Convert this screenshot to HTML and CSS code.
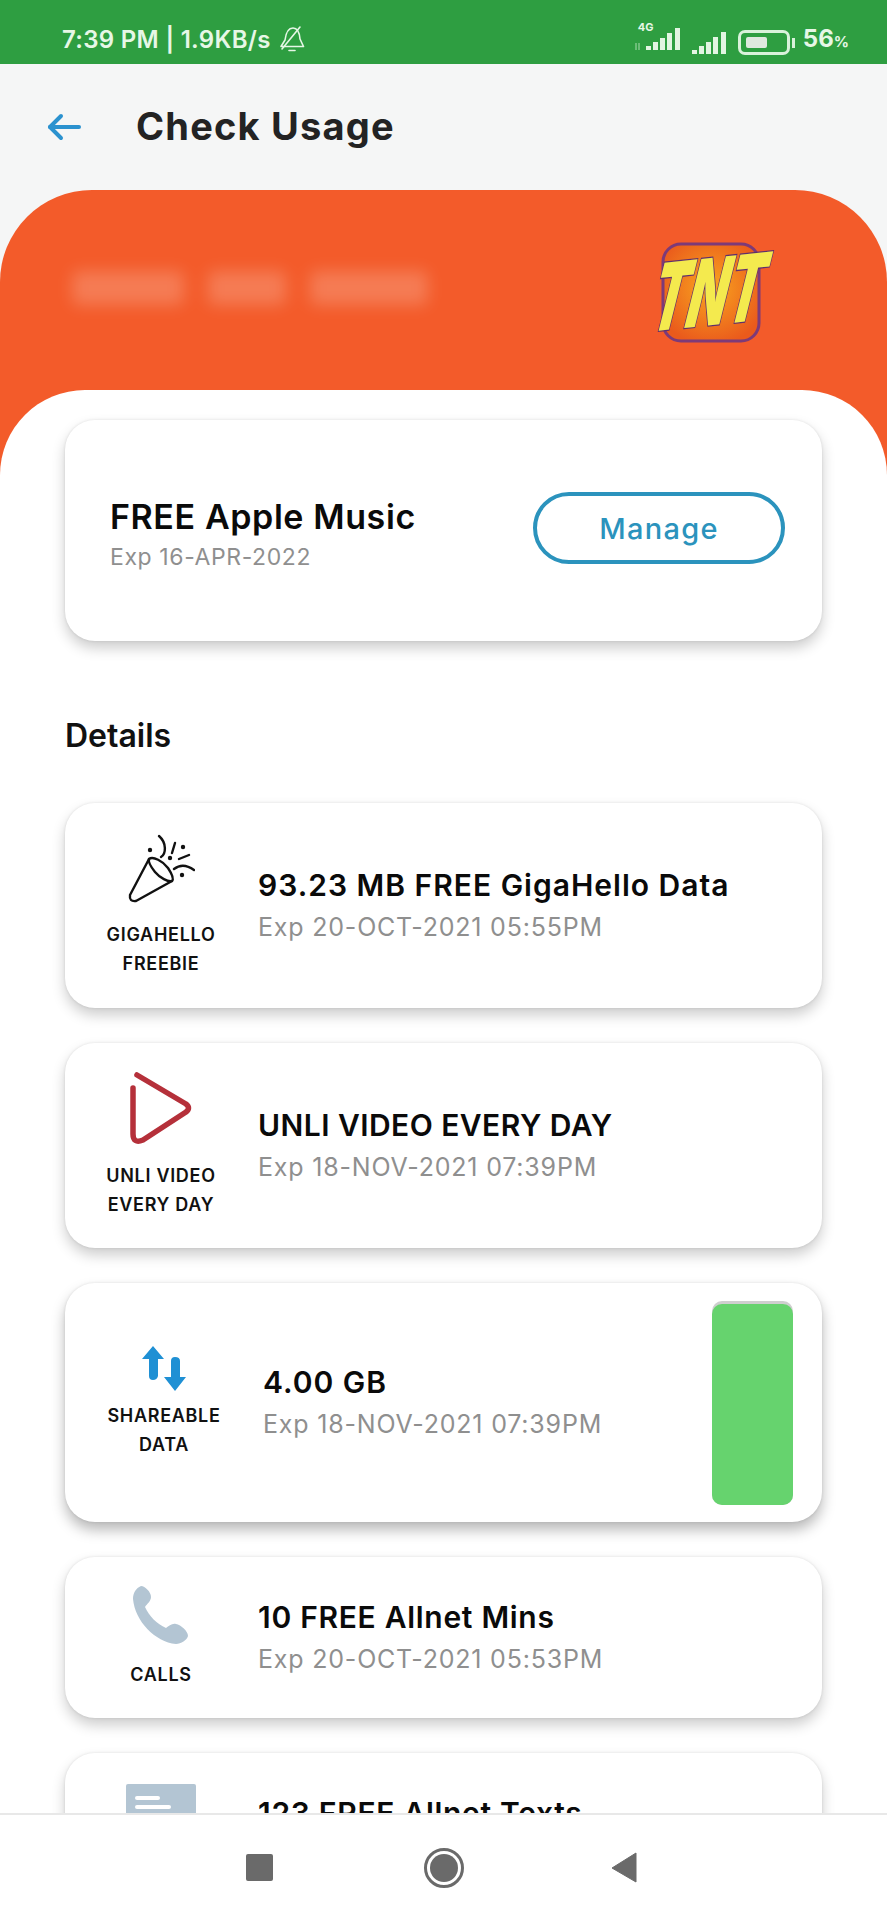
FILE: index.html
```html
<!DOCTYPE html>
<html lang="en">
<head>
    <meta charset="UTF-8">
    <meta name="viewport" content="width=device-width, initial-scale=1.0">
    <title>Check Usage</title>
    <link rel="stylesheet" href="styles.css">
</head>
<body>

    <!-- status bar -->
    <div class="status-bar">
        <div class="status-left">
            <span>7:39 PM | 1.9KB/s</span>
            <svg class="bell" width="28" height="28" viewBox="0 0 28 28" fill="none" stroke="#e6f7e6" stroke-width="1.6" stroke-linecap="round" stroke-linejoin="round">
                <path d="M3 21.5 L7 15 C8 7 11 3 15 3 C20 3 21.5 8 22 14 L25.5 21.5 Z"/>
                <path d="M11 25.5 H17"/>
                <path d="M4 24 L22 2"/>
            </svg>
        </div>
        <div class="status-right">
            <div class="signal-wrap">
                <span class="tag-4g">4G</span>
                <svg width="47" height="28" viewBox="0 0 47 28" fill="#e2f5e2">
                    <path d="M2 27 V20 M5 27 V20" stroke="#a9dcae" stroke-width="1" fill="none"/>
                    <rect x="12" y="23" width="5" height="4"/>
                    <rect x="19" y="19" width="5" height="8"/>
                    <rect x="26" y="15" width="5" height="12"/>
                    <rect x="33" y="10" width="5" height="17"/>
                    <rect x="41" y="5" width="5" height="22"/>
                </svg>
            </div>
            <svg width="35" height="28" viewBox="0 0 35 28" fill="#e2f5e2">
                <rect x="0" y="23" width="5" height="4"/>
                <rect x="7" y="19" width="5" height="8"/>
                <rect x="14" y="15" width="5" height="12"/>
                <rect x="21" y="10" width="5" height="17"/>
                <rect x="29" y="5" width="5" height="22"/>
            </svg>
            <div class="battery"><div class="battery-level"></div></div>
            <div class="battery-nub"></div>
            <span class="percent">56<small>%</small></span>
        </div>
    </div>

    <!-- title bar -->
    <div class="top-bar">
        <svg class="back" width="34" height="28" viewBox="0 0 34 28" fill="none" stroke="#2b92cf" stroke-width="4" stroke-linecap="round" stroke-linejoin="round">
            <path d="M14 3 L3 14 L14 25"/>
            <path d="M3 14 H32"/>
        </svg>
        <h1>Check Usage</h1>
    </div>

    <div class="main">
        <div class="hero">
            <div class="hero-head">
                <div class="masked-number">
                    <span class="blob blob-a"></span>
                    <span class="blob blob-b"></span>
                    <span class="blob blob-c"></span>
                </div>
                <svg class="logo" width="126" height="100" viewBox="0 0 126 100">
                    <defs>
                        <radialGradient id="logo-glow" cx="50%" cy="45%" r="60%">
                            <stop offset="0%" stop-color="#f9a51f"/>
                            <stop offset="100%" stop-color="#ea5a1c"/>
                        </radialGradient>
                    </defs>
                    <rect x="11" y="2" width="96" height="97" rx="18" fill="url(#logo-glow)" stroke="#7d3a78" stroke-width="3"/>
                    <text class="logo-text" transform="translate(-6 90) rotate(-6) skewX(-20)" textLength="112" lengthAdjust="spacingAndGlyphs">TNT</text>
                </svg>
            </div>

            <div class="sheet">
                <div class="card card-promo">
                    <div class="card-text">
                        <div class="promo-title">FREE Apple Music</div>
                        <div class="promo-exp">Exp 16-APR-2022</div>
                    </div>
                    <button class="manage-button">Manage</button>
                </div>

                <h2>Details</h2>

                <div class="card-list">
                    <div class="card">
                        <div class="card-icon">
                            <svg width="68" height="70" viewBox="0 0 68 70" fill="none" stroke="#111" stroke-width="2.4" stroke-linecap="round" stroke-linejoin="round">
                                <path d="M22 25 L3 61 Q2 68 9 67 L45 47"/>
                                <path d="M22 25 C26 22 36 27 41 34 C45 40 47 45 45 47 C41 48 33 44 28 38 C24 33 21 28 22 25 Z"/>
                                <path d="M32 2 C40 9 39 20 34 23"/>
                                <path d="M48 9 L45 19"/>
                                <path d="M52 25 L62 21"/>
                                <path d="M47 35 Q56 28 67 36"/>
                                <g fill="#111" stroke="none">
                                    <circle cx="23" cy="16" r="2.2"/>
                                    <circle cx="43" cy="24" r="2.2"/>
                                    <circle cx="56" cy="13" r="2.2"/>
                                    <circle cx="55" cy="41" r="2.2"/>
                                </g>
                            </svg>
                            <div class="card-label">GIGAHELLO<br>FREEBIE</div>
                        </div>
                        <div class="card-text">
                            <div class="card-title">93.23 MB FREE GigaHello Data</div>
                            <div class="card-exp">Exp 20-OCT-2021 05:55PM</div>
                        </div>
                    </div>

                    <div class="card">
                        <div class="card-icon">
                            <svg width="62" height="73" viewBox="0 0 62 73" fill="none" stroke="#b5303a" stroke-width="5.5" stroke-linecap="round" stroke-linejoin="round">
                                <path d="M7 3 L56 32 Q61 36 56 40 L13 68 Q3 72 3 62 V16"/>
                            </svg>
                            <div class="card-label">UNLI VIDEO<br>EVERY DAY</div>
                        </div>
                        <div class="card-text">
                            <div class="card-title title-caps">UNLI VIDEO EVERY DAY</div>
                            <div class="card-exp">Exp 18-NOV-2021 07:39PM</div>
                        </div>
                    </div>

                    <div class="card card-tall">
                        <div class="card-icon">
                            <svg width="45" height="46" viewBox="0 0 45 46" fill="#1f90d4">
                                <path d="M11 0 L22 13 H16 V30 Q15 34 11 34 Q7 34 7 30 V13 H0 Z"/>
                                <path d="M33 45 L22 31 H29 V15 Q29 11 33 11 Q38 11 38 15 V31 H44 Z"/>
                            </svg>
                            <div class="card-label">SHAREABLE<br>DATA</div>
                        </div>
                        <div class="card-text">
                            <div class="card-title">4.00 GB</div>
                            <div class="card-exp">Exp 18-NOV-2021 07:39PM</div>
                        </div>
                        <div class="meter"><div class="meter-fill"></div></div>
                    </div>

                    <div class="card card-short">
                        <div class="card-icon">
                            <svg width="56" height="58" viewBox="0 0 56 58" fill="#b3c5d3">
                                <path d="M0 13 C0 7 3 2 8 0 C12 0 18 6 18 11 C18 15 14 18 12 21 C16 30 24 38 33 42 C36 40 39 37 43 38 C48 39 55 45 55 50 C54 54 48 58 43 58 C22 56 2 35 0 13 Z"/>
                            </svg>
                            <div class="card-label">CALLS</div>
                        </div>
                        <div class="card-text">
                            <div class="card-title title-tight">10 FREE Allnet Mins</div>
                            <div class="card-exp">Exp 20-OCT-2021 05:53PM</div>
                        </div>
                    </div>

                    <!-- runs under the nav bar -->
                    <div class="card card-short card-cut">
                        <div class="card-icon">
                            <svg width="70" height="58" viewBox="0 0 70 58">
                                <rect width="70" height="58" rx="2" fill="#b3c5d3"/>
                                <rect x="9" y="12" width="25" height="4" rx="2" fill="#fff"/>
                                <rect x="9" y="21" width="36" height="4" rx="2" fill="#fff"/>
                                <rect x="9" y="30" width="30" height="4" rx="2" fill="#fff"/>
                            </svg>
                        </div>
                        <div class="card-text">
                            <div class="card-title title-tight">123 FREE Allnet Texts</div>
                        </div>
                    </div>
                </div>
            </div>
        </div>
    </div>

    <!-- android nav buttons -->
    <div class="nav-bar">
        <div class="nav-square"></div>
        <div class="nav-circle"><div class="nav-dot"></div></div>
        <svg class="nav-back" width="26" height="31" viewBox="0 0 26 31"><path d="M25 1 V30 L1 16 Z" fill="#6a6a6a" stroke="#6a6a6a" stroke-width="1" stroke-linejoin="round"/></svg>
    </div>

</body>
</html>
```

FILE: styles.css
```css
* {
    box-sizing: border-box;
}

body {
    margin: 0;
    height: 1920px;
    display: flex;
    flex-direction: column;
    overflow: hidden;
    font-family: Inter, "Noto Sans", sans-serif;
    background-color: #f5f6f6;
}

/* status bar */
.status-bar {
    height: 64px;
    flex-shrink: 0;
    display: flex;
    justify-content: space-between;
    align-items: center;
    padding: 14px 38px 0 62px;
    background-color: #2e9e41;
    color: #e6f7e6;
}

.status-left {
    display: flex;
    align-items: center;
    gap: 7px;
    font-size: 24px;
    font-weight: 600;
    letter-spacing: 0.3px;
}

.status-right {
    display: flex;
    align-items: flex-end;
    height: 28px;
    margin-top: 4px;
}

.signal-wrap {
    position: relative;
    margin-right: 11px;
}

.tag-4g {
    position: absolute;
    top: -3px;
    left: 4px;
    font-size: 11px;
    font-weight: 700;
}

.battery {
    width: 52px;
    height: 25px;
    margin-left: 11px;
    padding: 4px 5px;
    border: 3px solid #d9f2da;
    border-radius: 7px;
}

.battery-level {
    width: 60%;
    height: 100%;
    border-radius: 2px;
    background-color: #dfe9df;
}

.battery-nub {
    width: 3px;
    height: 10px;
    margin: 0 0 7px 2px;
    background-color: #d9f2da;
}

.percent {
    margin: 0 0 1px 8px;
    font-size: 24px;
    font-weight: 700;
    line-height: 25px;
}

.percent small {
    font-size: 15px;
}

/* title bar */
.top-bar {
    height: 126px;
    flex-shrink: 0;
    display: flex;
    align-items: center;
    padding-left: 47px;
    background-color: #f5f6f6;
}

.top-bar h1 {
    margin: 0 0 2px 55px;
    font-size: 38px;
    font-weight: 700;
    letter-spacing: 1.2px;
    color: #232323;
}

/* orange block with the white sheet on it */
.main {
    flex: 1;
    min-height: 0;
    overflow: hidden;
}

.hero {
    height: 100%;
    display: flex;
    flex-direction: column;
    border-radius: 92px 92px 0 0;
    background-color: #f35b2a;
}

.hero-head {
    height: 200px;
    flex-shrink: 0;
    display: flex;
    justify-content: space-between;
    align-items: center;
    padding: 4px 109px 0 72px;
}

.masked-number {
    display: flex;
    gap: 24px;
    margin-top: -8px;
    filter: blur(8px);
}

.blob {
    height: 34px;
    border-radius: 6px;
    background-color: rgba(255, 255, 255, 0.2);
}

.blob-a {
    width: 112px;
}

.blob-b {
    width: 78px;
}

.blob-c {
    width: 118px;
}

.logo {
    overflow: visible;
}

.logo-text {
    font-family: Inter, sans-serif;
    font-size: 92px;
    font-weight: 900;
    fill: #f4ea4e;
    stroke: #5f2f6d;
    stroke-width: 2.5;
    paint-order: stroke;
}

.sheet {
    flex: 1;
    padding: 30px 65px 0;
    border-radius: 85px 85px 0 0;
    background-color: #fff;
}

.sheet h2 {
    margin: 72px 0 44px;
    font-size: 32px;
    font-weight: 600;
    line-height: 46px;
    color: #111;
}

/* cards */
.card-list {
    display: flex;
    flex-direction: column;
    gap: 35px;
}

.card {
    height: 205px;
    display: flex;
    align-items: center;
    padding-left: 31px;
    border-radius: 30px;
    background-color: #fff;
    box-shadow: 0 7px 14px rgba(0, 0, 0, 0.2), 0 0 3px rgba(0, 0, 0, 0.1);
}

.card-tall {
    height: 239px;
    padding-left: 34px;
    box-shadow: 0 8px 14px rgba(0, 0, 0, 0.28), 0 0 3px rgba(0, 0, 0, 0.1);
}

.card-tall .card-text {
    margin-left: 34px;
}

.card-tall .card-label {
    margin-top: 9px;
}

.card-short {
    height: 161px;
}

/* icon and title sit from the top, the rest is hidden by the nav bar */
.card-cut {
    align-items: flex-start;
    padding-top: 31px;
}

.card-cut .card-text {
    margin-top: 9px;
}

.card-promo {
    height: 221px;
    justify-content: space-between;
    padding: 0 37px 0 45px;
}

.card-promo .card-text {
    margin: 6px 0 0;
}

.promo-title {
    font-size: 34px;
    font-weight: 600;
    letter-spacing: 0.6px;
    color: #0a0a0a;
}

.promo-exp {
    margin-top: 6px;
    font-size: 23px;
    letter-spacing: 0.6px;
    color: #8f8f8f;
}

.manage-button {
    width: 252px;
    height: 72px;
    margin-bottom: 5px;
    border: 4px solid #2b93bd;
    border-radius: 36px;
    background-color: #fff;
    font-family: inherit;
    font-size: 29px;
    font-weight: 500;
    letter-spacing: 1.3px;
    color: #2b93bd;
}

.card-icon {
    width: 130px;
    flex-shrink: 0;
    display: flex;
    flex-direction: column;
    align-items: center;
}

.card-label {
    margin-top: 16px;
    font-size: 18px;
    font-weight: 600;
    letter-spacing: 0.7px;
    line-height: 29px;
    text-align: center;
    white-space: nowrap;
    color: #111;
}

.card-text {
    margin-left: 32px;
}

.card-title {
    font-size: 30px;
    font-weight: 600;
    letter-spacing: 1px;
    line-height: 40px;
    color: #0a0a0a;
}

.title-caps {
    letter-spacing: 0.45px;
}

.title-tight {
    letter-spacing: 0.7px;
}

.card-exp {
    margin-top: 2px;
    font-size: 25px;
    letter-spacing: 0.8px;
    line-height: 40px;
    color: #8f8f8f;
}

.meter {
    width: 81px;
    height: 204px;
    margin: 0 29px 0 auto;
    padding-top: 3px;
    border-radius: 10px;
    background-color: #cfcfcf;
}

.meter-fill {
    height: 100%;
    border-radius: 10px;
    background-color: #66d36e;
}

/* nav buttons */
.nav-bar {
    height: 107px;
    flex-shrink: 0;
    display: flex;
    justify-content: center;
    align-items: center;
    gap: 150px;
    padding-right: 5px;
    border-top: 2px solid #e8e8e8;
    background-color: #fff;
}

.nav-square {
    width: 27px;
    height: 27px;
    margin-right: 1px;
    border-radius: 2px;
    background-color: #6a6a6a;
}

.nav-circle {
    width: 40px;
    height: 40px;
    display: flex;
    justify-content: center;
    align-items: center;
    border: 3px solid #6a6a6a;
    border-radius: 50%;
}

.nav-dot {
    width: 28px;
    height: 28px;
    border-radius: 50%;
    background-color: #6a6a6a;
}

.nav-back {
    margin-left: -3px;
}
```
